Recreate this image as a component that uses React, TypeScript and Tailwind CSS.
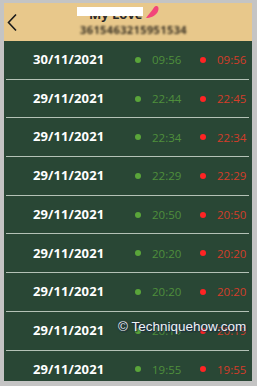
import React from 'react';

const rows = [
  { date: '30/11/2021', on: '09:56', off: '09:56' },
  { date: '29/11/2021', on: '22:44', off: '22:45' },
  { date: '29/11/2021', on: '22:34', off: '22:34' },
  { date: '29/11/2021', on: '22:29', off: '22:29' },
  { date: '29/11/2021', on: '20:50', off: '20:50' },
  { date: '29/11/2021', on: '20:20', off: '20:20' },
  { date: '29/11/2021', on: '20:20', off: '20:20' },
  { date: '29/11/2021', on: '20:19', off: '20:19' },
  { date: '29/11/2021', on: '19:55', off: '19:55' },
];

export default function App() {
  return (
    <div
      className="w-[257px] h-[386px] bg-[#c4c4c4] pt-[3px] pl-[4px] pr-[5px] pb-[5px] overflow-hidden"
      style={{ fontFamily: '"Open Sans", "Noto Sans", sans-serif' }}
    >
      <div className="relative h-full flex flex-col bg-[#294735] overflow-hidden">
        {/* header */}
        <div className="relative h-[38px] shrink-0 bg-[#e8c88b] flex items-center">
          <svg className="absolute left-[2px] top-[10px]" width="12" height="19" viewBox="0 0 12 19">
            <path d="M10 1.5 L2.5 9.5 L10 17.5" fill="none" stroke="#1b1b1b" strokeWidth="1.6" />
          </svg>
          <div className="absolute left-[73px] top-[4px] w-[70px] h-[14px] flex items-end">
            <span className="text-[13px] leading-none font-bold text-[#2a2a2a] pl-[12px]">My Love</span>
            <div className="absolute left-0 top-0 w-[66px] h-[9px] bg-white" />
          </div>
          <svg className="absolute left-[140px] top-[2px]" width="16" height="14" viewBox="0 0 16 14">
            <path d="M13 1 C15 2 15 5 13 8 C11 11 6 13 2 13 C4 10 7 7 9 4 C10 2 11 0.5 13 1 Z" fill="#f2457a" />
          </svg>
          <div className="absolute left-[76px] top-[21px] text-[11px] leading-none font-bold text-[#3a3224] blur-[1.3px] tracking-[0.4px]">
            3615463215951534
          </div>
        </div>

        {/* rows */}
        {rows.map((r, i) => (
          <div key={i} className="shrink-0">
            {i > 0 && <div className="h-[1px] ml-[2px] mr-[3px] bg-[#b4c2b6]" />}
            <div className="h-[37.7px] flex items-center pl-[29px]">
              <span className="w-[102px] shrink-0 text-[13px] font-bold text-white tracking-[0.1px]">{r.date}</span>
              <span className="w-[6px] h-[6px] shrink-0 rounded-full bg-[#5aa53a]" />
              <span className="ml-[11px] w-[48px] shrink-0 text-[11.5px] text-[#4f8f3c]">{r.on}</span>
              <span className="w-[6px] h-[6px] shrink-0 rounded-full bg-[#ff2424]" />
              <span className="ml-[11px] text-[11.5px] text-[#d43d2a]">{r.off}</span>
            </div>
          </div>
        ))}

        {/* watermark */}
        <div
          className="absolute left-[114px] top-[314px] text-[13.5px] text-[#eef2f6] whitespace-nowrap"
          style={{ fontFamily: '"Liberation Sans", Arial, sans-serif', textShadow: '0 0 2px #1a2a40, 1px 1px 1px #1a2a40' }}
        >
          © Techniquehow.com
        </div>
      </div>
    </div>
  );
}
